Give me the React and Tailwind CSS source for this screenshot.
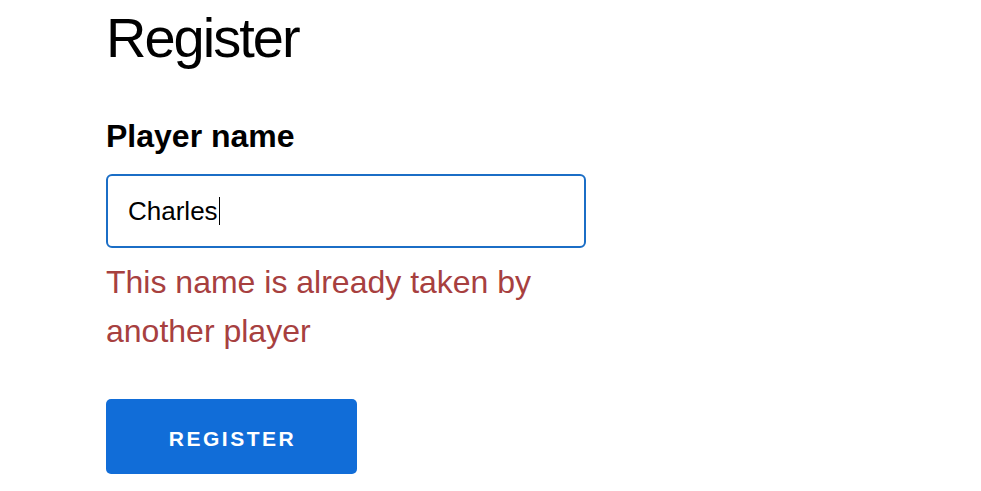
export default function App() {
  return (
    <div className="w-[981px] h-[491px] bg-white overflow-hidden pl-[106px]" style={{ fontFamily: '"Liberation Sans", Arial, sans-serif' }}>
      <div className="w-[480px]">
        <h1 className="mt-[10px] text-[56px] leading-[56px] font-normal tracking-[-2px] text-black">Register</h1>
        <div className="mt-[55px] text-[32px] leading-[31px] font-bold text-black">Player name</div>
        <div className="mt-[22px] h-[74px] w-[480px] border-2 border-[#1b6ec6] rounded-[6px] flex items-center pl-[20px]">
          <span className="text-[26px] text-black">Charles</span>
          <span className="ml-[1px] w-[1.5px] h-[28px] bg-black"></span>
        </div>
        <div className="mt-[10px] text-[32px] leading-[49px] text-[#a7403f]">This name is already taken by another player</div>
        <button className="mt-[43px] w-[251px] h-[75px] rounded-[5px] bg-[#116dd8] text-white text-[21px] font-bold tracking-[2.5px] flex items-center justify-center pt-[4px] pl-[2px]">REGISTER</button>
      </div>
    </div>
  );
}
